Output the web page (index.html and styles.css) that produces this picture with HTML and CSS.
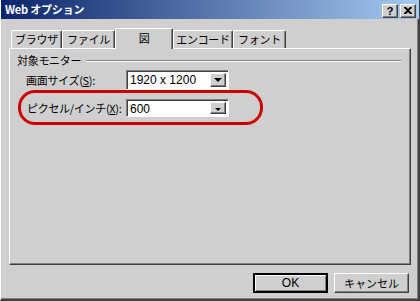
FILE: index.html
```html
<!DOCTYPE html>
<html lang="ja">
<head>
  <meta charset="UTF-8" />
  <title>Web オプション</title>
  <link rel="stylesheet" href="styles.css">
</head>
<body>
  <div class="window">
    <div class="titlebar">
      <span class="title">Web オプション</span>
      <div class="caption-btns">
        <button class="cap-btn">?</button>
        <button class="cap-btn">
          <svg width="8" height="7" viewBox="0 0 8 7"><path d="M0 0h2l2 2 2-2h2v1L5 3.5 8 6v1H6L4 5 2 7H0V6l3-2.5L0 1z" fill="#000"/></svg>
        </button>
      </div>
    </div>

    <div class="body">
      <div class="tabs">
        <div class="tab w1">ブラウザ</div>
        <div class="tab w2">ファイル</div>
        <div class="tab w3 active">図</div>
        <div class="tab w4">エンコード</div>
        <div class="tab w5">フォント</div>
      </div>

      <div class="panel">
        <div class="group-head">
          <span>対象モニター</span>
          <div class="group-line"></div>
        </div>

        <div class="row">
          <label>画面サイズ(<u>S</u>):</label>
          <div class="combo">
            <span class="combo-val">1920 x 1200</span>
            <span class="combo-arrow"><i></i></span>
          </div>
        </div>

        <div class="row marked">
          <label>ピクセル/インチ(<u>X</u>):</label>
          <div class="combo short">
            <span class="combo-val">600</span>
            <span class="combo-arrow"><i></i></span>
          </div>
        </div>
      </div>

      <div class="actions">
        <button class="btn default">OK</button>
        <button class="btn">キャンセル</button>
      </div>
    </div>
  </div>
</body>
</html>
```

FILE: styles.css
```css
* { box-sizing: border-box; margin: 0; padding: 0; }
body {
  width: 420px; height: 301px; overflow: hidden;
  background: #cfcfcf;
  font-family: "Noto Sans CJK JP", "DejaVu Sans", sans-serif;
  font-size: 11px; color: #000;
  white-space: nowrap;
  letter-spacing: -0.3px;
}
.window {
  height: 301px;
  border-left: 1px solid #fff;
  border-right: 2px solid #404040;
  border-bottom: 2px solid #404040;
  box-shadow: inset -1px -1px 0 #808080;
  display: flex; flex-direction: column;
}
.titlebar {
  height: 19px;
  margin-right: -1px;
  background: linear-gradient(to right, #0a246a, #a6caf0);
  display: flex; align-items: center; justify-content: space-between;
  padding: 0 3px 0 4px;
}
.title { color: #fff; font-weight: bold; font-size: 11px; line-height: 1; letter-spacing: -0.2px; }
.caption-btns { display: flex; gap: 2px; margin-top: 2px; }
.cap-btn {
  width: 16px; height: 14px;
  background: #cfcfcf;
  border: 1px solid; border-color: #fff #404040 #404040 #fff;
  box-shadow: inset -1px -1px 0 #808080;
  font: bold 11px "Liberation Sans", sans-serif; line-height: 10px;
  display: flex; align-items: center; justify-content: center;
}
.body { flex: 1; padding: 9px 8px 0 8px; display: flex; flex-direction: column; }
.tabs { display: flex; align-items: flex-end; height: 20px; padding-left: 2px; position: relative; z-index: 1; }
.tab {
  height: 18px;
  border: 1px solid; border-bottom: none;
  border-color: #fff #404040 transparent #fff;
  border-radius: 2px 2px 0 0;
  box-shadow: inset -1px 0 0 #808080;
  display: flex; align-items: center; justify-content: center;
  line-height: 1;
}
.tab.active { height: 21px; margin-bottom: -1px; background: #cfcfcf; padding-bottom: 1px; }
.w1 { width: 51px; }
.w2 { width: 53px; }
.w3 { width: 58px; }
.w4 { width: 60px; }
.w5 { width: 53px; }
.panel {
  width: 402px; height: 217px;
  border: 1px solid; border-color: #fff #404040 #404040 #fff;
  box-shadow: inset -1px -1px 0 #808080;
  padding: 5px 0 0 7px;
}
.group-head { display: flex; align-items: center; gap: 5px; height: 13px; line-height: 1; }
.group-line { flex: 1; margin-right: 9px; height: 2px; border-top: 1px solid #808080; border-bottom: 1px solid #fff; }
.row { display: flex; align-items: center; height: 20px; margin-top: 3px; padding-left: 9px; }
.row label { width: 100px; line-height: 1; }
.combo {
  width: 103px; height: 20px;
  border: 1px solid; border-color: #808080 #fff #fff #808080;
  box-shadow: inset 1px 1px 0 #404040;
  background: #fff;
  display: flex; align-items: stretch; padding: 2px 2px 2px 2px;
}
.combo.short { height: 18px; }
.combo-val { flex: 1; padding-left: 1px; line-height: 14px; font-family: "Liberation Sans", sans-serif; font-size: 12px; letter-spacing: 0; }
.combo-arrow {
  width: 16px;
  background: #cfcfcf;
  border: 1px solid; border-color: #fff #404040 #404040 #fff;
  box-shadow: inset -1px -1px 0 #808080;
  display: flex; align-items: center; justify-content: center;
}
.combo-arrow i { width: 0; height: 0; border-left: 4px solid transparent; border-right: 4px solid transparent; border-top: 4px solid #000; }
.combo.short .combo-arrow i { border-left-width: 3px; border-right-width: 3px; border-top-width: 3px; margin-top: 3px; }
.row.marked {
  width: 245px; height: 35px; margin-top: 0; margin-left: 1px;
  border: 3px solid #cc0000; border-radius: 17px;
  padding-left: 6px; padding-top: 1px;
}
.row.marked label { width: 99px; }
.actions { display: flex; justify-content: flex-end; gap: 6px; margin-top: 8px; padding-right: 1px; }
.btn {
  width: 75px; height: 20px;
  background: #cfcfcf;
  border: 1px solid; border-color: #fff #404040 #404040 #fff;
  box-shadow: inset -1px -1px 0 #808080;
  font-family: "Noto Sans CJK JP", sans-serif; font-size: 11px; line-height: 1;
}
.btn.default { border: 2px solid; border-color: #000; box-shadow: inset 1px 1px 0 #fff, inset -1px -1px 0 #808080; font-family: "Liberation Sans", sans-serif; font-size: 12px; }
```
